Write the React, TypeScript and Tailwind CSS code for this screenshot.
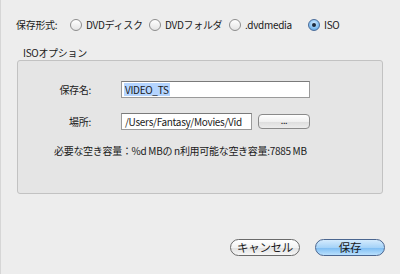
import React from "react";

const font = { fontFamily: '"Noto Sans CJK JP", "Noto Sans", sans-serif' };

function Radio({ checked, label }: { checked?: boolean; label: string }) {
  return (
    <div className="flex items-center">
      {checked ? (
        <span className="w-[12px] h-[12px] rounded-full border border-[#4a6c9a] bg-[radial-gradient(circle_at_50%_35%,#d6ecff_0%,#7fbdf0_60%,#4f95d6_100%)] flex items-center justify-center">
          <span className="w-[4px] h-[4px] rounded-full bg-[#1b2a3d]" />
        </span>
      ) : (
        <span className="w-[12px] h-[12px] rounded-full border border-[#8d8d8d] bg-[linear-gradient(#ffffff,#e4e4e4)]" />
      )}
      <span className="ml-[4px]">{label}</span>
    </div>
  );
}

export default function App() {
  return (
    <div
      className="w-[400px] h-[274px] bg-[#ededed] border-l border-[#d6d6d6] text-[10px] tracking-[-0.3px] leading-[13px] text-[#1a1a1a] flex flex-col"
      style={font}
    >
      <div className="flex items-center pt-[18px] pl-[15px] h-[31px]">
        <span className="w-[54px]">保存形式:</span>
        <div className="flex items-center">
          <div className="w-[79px]">
            <Radio label="DVDディスク" />
          </div>
          <div className="w-[80px]">
            <Radio label="DVDフォルダ" />
          </div>
          <div className="w-[79px]">
            <Radio label=".dvdmedia" />
          </div>
          <Radio checked label="ISO" />
        </div>
      </div>
      <div className="pl-[22px] mt-[15px]">ISOオプション</div>
      <div className="ml-[16px] mt-[1px] w-[366px] h-[134px] rounded-[3px] border border-[#c2c2c2] bg-[#e5e5e5] flex flex-col">
        <div className="flex items-center mt-[20px] h-[17px]">
          <span className="w-[73px] text-right">保存名:</span>
          <div className="ml-[30px] w-[189px] h-[17px] bg-white border border-[#9a9a9a] border-t-[#7a7a7a] flex items-center pl-[2px]">
            <span className="bg-[#b5d5ff] px-[1px]">VIDEO_TS</span>
          </div>
        </div>
        <div className="flex items-center mt-[15px] h-[17px]">
          <span className="w-[73px] text-right">場所:</span>
          <div className="ml-[30px] w-[131px] h-[17px] bg-white border border-[#9a9a9a] border-t-[#7a7a7a] flex items-center pl-[3px] overflow-hidden whitespace-nowrap">
            /Users/Fantasy/Movies/Vid
          </div>
          <button className="ml-[6px] w-[52px] h-[15px] rounded-[4px] border border-[#8a8a8a] bg-[linear-gradient(#ffffff,#f0f0f0_50%,#dcdcdc_51%,#ececec)] text-[9px] leading-[9px] flex items-center justify-center pb-[3px]">
            ...
          </button>
        </div>
        <div className="mt-[14px] pl-[36px] whitespace-nowrap">
          必要な空き容量：%d MBの n利用可能な空き容量:7885 MB
        </div>
      </div>
      <div className="flex justify-end items-center mt-[45px] pr-[15px] gap-[15px]">
        <button className="w-[70px] h-[17px] rounded-full border border-[#6a6a6a] bg-[linear-gradient(#ffffff,#f3f3f3_50%,#e0e0e0_51%,#f6f6f6)] flex items-center justify-center text-[11.5px]">
          キャンセル
        </button>
        <button className="w-[70px] h-[17px] rounded-full border border-[#4b6690] bg-[linear-gradient(#d4ebfd,#a6d3f8_50%,#7cbcf2_51%,#b9e0fd)] flex items-center justify-center text-[11.5px]">
          保存
        </button>
      </div>
    </div>
  );
}
